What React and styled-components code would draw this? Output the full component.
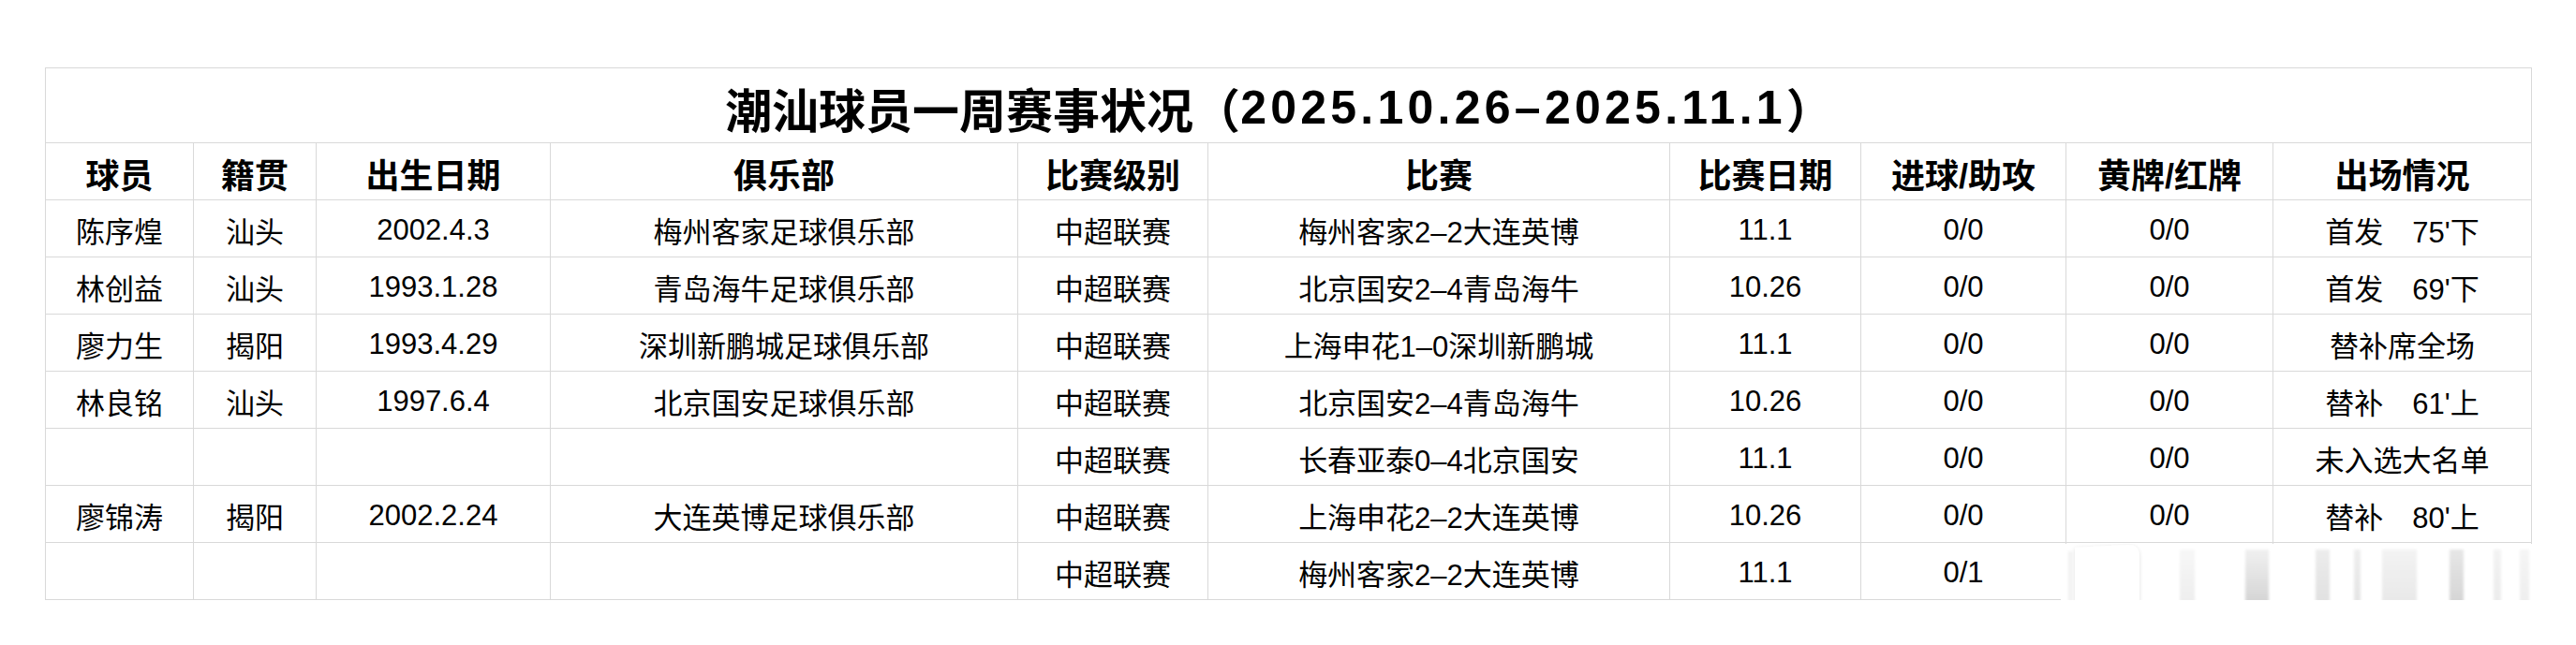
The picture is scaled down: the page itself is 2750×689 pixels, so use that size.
import React from 'react';
import styled, { createGlobalStyle } from 'styled-components';

const LINE = '#d9d9d9';
const COLS = [158, 131, 250, 499, 203, 493, 204, 219, 221, 276];

const GlobalStyle = createGlobalStyle`
  body {
    margin: 0;
    background: #fff;
  }
`;

const Page = styled.div`
  padding: 72px 0 0 48px;
  font-family: "Liberation Sans", "Noto Sans CJK SC", sans-serif;
  color: #000;
`;

const Sheet = styled.div`
  position: relative;
  display: grid;
  grid-template-columns: ${COLS.map((w) => w + 'px').join(' ')};
  grid-template-rows: 80px;
  grid-auto-rows: 61px;
  width: max-content;
  border-top: 1px solid ${LINE};
  border-left: 1px solid ${LINE};
`;

const Cell = styled.div`
  box-sizing: border-box;
  display: flex;
  align-items: center;
  justify-content: center;
  padding-top: 3px;
  border-right: 1px solid ${LINE};
  border-bottom: 1px solid ${LINE};
  font-size: 31px;
  white-space: pre;
`;

const HeadCell = styled(Cell)`
  font-size: 36px;
  font-weight: 700;
`;

const Title = styled(Cell)`
  grid-column: 1 / -1;
  font-size: 50px;
  font-weight: 700;
  padding-top: 4px;
  padding-right: 20px;
`;

// 标题里的日期字形比较宽
const Dates = styled.span`
  letter-spacing: 0.085em;
`;

// 右下角被一块模糊的白色遮挡住
const Smudge = styled.div`
  position: absolute;
  left: 2151px;
  top: 508px;
  width: 510px;
  height: 84px;
  background: #fff;
`;

const heads = ['球员', '籍贯', '出生日期', '俱乐部', '比赛级别', '比赛', '比赛日期', '进球/助攻', '黄牌/红牌', '出场情况'];

const rows = [
  ['陈序煌', '汕头', '2002.4.3', '梅州客家足球俱乐部', '中超联赛', '梅州客家2–2大连英博', '11.1', '0/0', '0/0', "首发\u300075'下"],
  ['林创益', '汕头', '1993.1.28', '青岛海牛足球俱乐部', '中超联赛', '北京国安2–4青岛海牛', '10.26', '0/0', '0/0', "首发\u300069'下"],
  ['廖力生', '揭阳', '1993.4.29', '深圳新鹏城足球俱乐部', '中超联赛', '上海申花1–0深圳新鹏城', '11.1', '0/0', '0/0', '替补席全场'],
  ['林良铭', '汕头', '1997.6.4', '北京国安足球俱乐部', '中超联赛', '北京国安2–4青岛海牛', '10.26', '0/0', '0/0', "替补\u300061'上"],
  ['', '', '', '', '中超联赛', '长春亚泰0–4北京国安', '11.1', '0/0', '0/0', '未入选大名单'],
  ['廖锦涛', '揭阳', '2002.2.24', '大连英博足球俱乐部', '中超联赛', '上海申花2–2大连英博', '10.26', '0/0', '0/0', "替补\u300080'上"],
  ['', '', '', '', '中超联赛', '梅州客家2–2大连英博', '11.1', '0/1', '', ''],
];

const bars = [
  { x: 127, w: 16, top: '#f7f7f7', bottom: '#ececec' },
  { x: 197, w: 25, top: '#f0f0f0', bottom: '#cfcfcf' },
  { x: 272, w: 15, top: '#ececec', bottom: '#dedede' },
  { x: 313, w: 7, top: '#eeeeee', bottom: '#e2e2e2' },
  { x: 343, w: 37, top: '#f3f3f3', bottom: '#e6e6e6' },
  { x: 415, w: 15, top: '#e6e6e6', bottom: '#d2d2d2' },
  { x: 462, w: 8, top: '#f3f3f3', bottom: '#eaeaea' },
  { x: 490, w: 10, top: '#f5f5f5', bottom: '#ededed' },
];

const SmudgeArt = () => (
  <svg width="510" height="84" viewBox="0 0 510 84">
    <defs>
      <filter id="soft" x="-20%" y="-20%" width="140%" height="140%">
        <feGaussianBlur stdDeviation="1.6" />
      </filter>
      <filter id="drop" x="-30%" y="-30%" width="160%" height="160%">
        <feDropShadow dx="0" dy="1" stdDeviation="2" floodColor="#000" floodOpacity="0.12" />
      </filter>
      {bars.map((b, i) => (
        <linearGradient key={i} id={`bar${i}`} x1="0" y1="0" x2="0" y2="1">
          <stop offset="0" stopColor={b.top} />
          <stop offset="1" stopColor={b.bottom} />
        </linearGradient>
      ))}
    </defs>
    <g filter="url(#soft)">
      {bars.map((b, i) => (
        <rect key={i} x={b.x} y="6" width={b.w} height="68" fill={`url(#bar${i})`} />
      ))}
      <rect x="8" y="8" width="4" height="60" fill="#f1f1f1" />
      <rect x="22" y="10" width="3" height="56" fill="#f3f3f3" />
    </g>
    <path
      d="M15 4 L72 1 Q84 1 84 14 L84 66 Q84 77 60 77 L34 77 Q15 77 15 66 Z"
      fill="#fff"
      filter="url(#drop)"
    />
  </svg>
);

export default function App() {
  return (
    <Page>
      <GlobalStyle />
      <Sheet>
        <Title>
          潮汕球员一周赛事状况（<Dates>2025.10.26–2025.11.1</Dates>）
        </Title>
        {heads.map((h) => (
          <HeadCell key={h}>{h}</HeadCell>
        ))}
        {rows.map((r, i) =>
          r.map((v, j) => <Cell key={i + '-' + j}>{v}</Cell>)
        )}
        <Smudge>
          <SmudgeArt />
        </Smudge>
      </Sheet>
    </Page>
  );
}
